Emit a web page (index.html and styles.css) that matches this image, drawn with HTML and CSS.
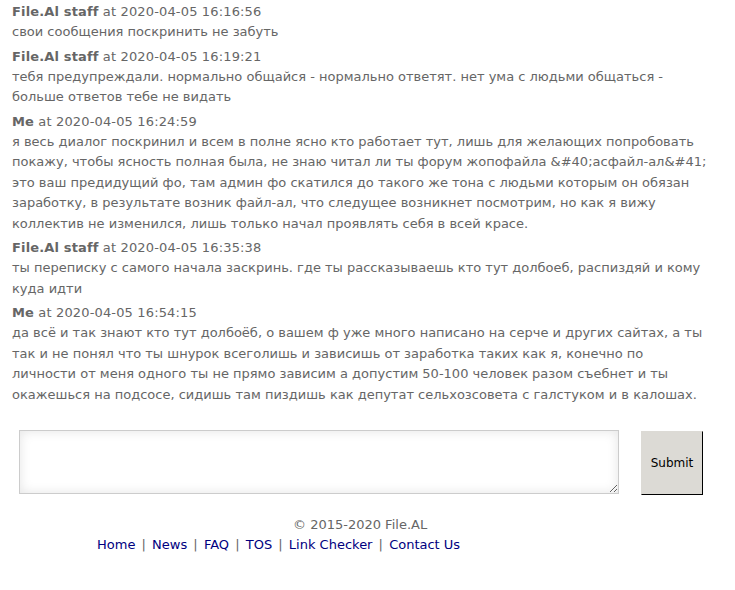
FILE: index.html
```html
<!DOCTYPE html>
<html lang="ru">

<head>
    <meta charset="UTF-8" />
    <title>File.AL - Ticket</title>
    <link rel="stylesheet" href="styles.css">
</head>

<body>

    <!-- Messages -->
    <div id="messages">
        <div class="msg">
            <div class="msg-head"><b>File.Al staff</b> at 2020-04-05 16:16:56</div>
            <div class="msg-body">свои сообщения поскринить не забуть</div>
        </div>
        <div class="msg">
            <div class="msg-head"><b>File.Al staff</b> at 2020-04-05 16:19:21</div>
            <div class="msg-body">тебя предупреждали. нормально общайся - нормально ответят. нет ума с людьми общаться - больше ответов тебе не видать</div>
        </div>
        <div class="msg">
            <div class="msg-head"><b>Me</b> at 2020-04-05 16:24:59</div>
            <div class="msg-body">я весь диалог поскринил и всем в полне ясно кто работает тут, лишь для желающих попробовать покажу, чтобы ясность полная была, не знаю читал ли ты форум жопофайла &amp;#40;асфайл-ал&amp;#41; это ваш предидущий фо, там админ фо скатился до такого же тона с людьми которым он обязан заработку, в результате возник файл-ал, что следущее возникнет посмотрим, но как я вижу коллектив не изменился, лишь только начал проявлять себя в всей красе.</div>
        </div>
        <div class="msg">
            <div class="msg-head"><b>File.Al staff</b> at 2020-04-05 16:35:38</div>
            <div class="msg-body">ты переписку с самого начала заскринь. где ты рассказываешь кто тут долбоеб, распиздяй и кому куда идти</div>
        </div>
        <div class="msg">
            <div class="msg-head"><b>Me</b> at 2020-04-05 16:54:15</div>
            <div class="msg-body">да всё и так знают кто тут долбоёб, о вашем ф уже много написано на серче и других сайтах, а ты так и не понял что ты шнурок всеголишь и зависишь от заработка таких как я, конечно по личности от меня одного ты не прямо зависим а допустим 50-100 человек разом съебнет и ты окажешься на подсосе, сидишь там пиздишь как депутат сельхозсовета с галстуком и в калошах.</div>
        </div>
    </div>

    <!-- Reply form -->
    <form id="reply">
        <textarea class="reply-text" name="message"></textarea>
        <button class="btn" type="button">Submit</button>
    </form>

    <!-- Footer -->
    <div id="footer">
        <div class="copy">&copy; 2015-2020 File.AL</div>
        <div class="links">
            <a href="#">Home</a> <span class="sep">|</span> <a href="#">News</a> <span class="sep">|</span> <a href="#">FAQ</a> <span class="sep">|</span> <a href="#">TOS</a> <span class="sep">|</span> <a href="#">Link Checker</a> <span class="sep">|</span> <a href="#">Contact Us</a>
        </div>
    </div>

</body>

</html>
```
FILE: styles.css
```css
body {
    font-family: "DejaVu Sans", Verdana, sans-serif;
    font-size: 13px;
    background-color: #fff;
    color: #666;
    margin: 0;
}

#messages {
    padding: 2px 12px 0;
    width: 696px;
}

.msg {
    margin-bottom: 4px;
}

.msg-head {
    line-height: 20px;
    letter-spacing: 0.15px;
}

.msg-body {
    line-height: 20.5px;
}

#reply {
    display: flex;
    align-items: flex-start;
    gap: 22px;
    margin: 25px 0 0 19px;
}

.reply-text {
    width: 598px;
    height: 62px;
    border: 1px solid #ccc;
    box-shadow: inset 0 0 12px #e4e4e4;
    padding: 0;
    margin: 0;
    font-family: "DejaVu Sans", Verdana, sans-serif;
}

.btn {
    width: 62px;
    height: 64px;
    background-color: #dcdad5;
    border: 1px solid;
    border-color: #dcdad5 #000 #000 #dcdad5;
    font-family: "DejaVu Sans", Verdana, sans-serif;
    font-size: 12px;
    color: #000;
    padding: 0;
    margin-top: 1px;
}

#footer {
    margin-top: 20px;
    line-height: 20px;
}

.copy {
    padding-left: 293px;
}

.links {
    padding-left: 97px;
}

.links a {
    color: #00007f;
    text-decoration: none;
}

.sep {
    margin: 0 2px;
}
```
